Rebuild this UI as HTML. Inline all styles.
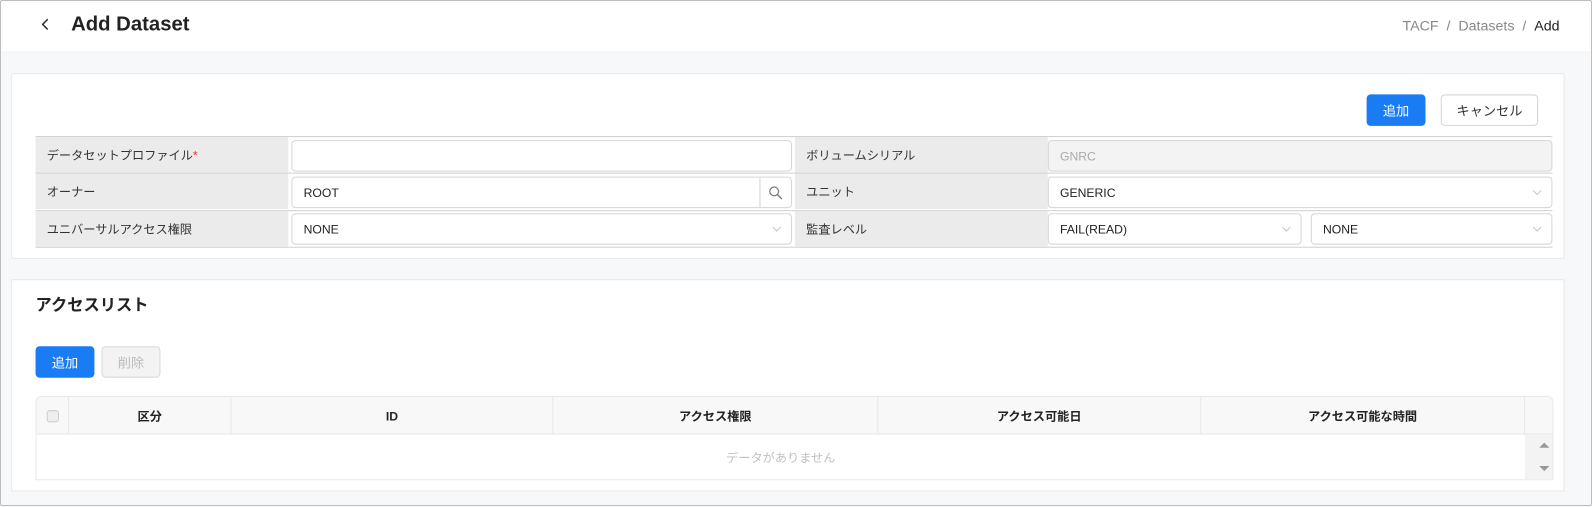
<!DOCTYPE html>
<html><head><meta charset="utf-8"><style>
*{box-sizing:border-box;margin:0;padding:0}
body{width:1592px;height:506px;background:#f7f8fa;font-family:"Liberation Sans","Noto Sans CJK JP",sans-serif;position:relative;overflow:hidden;color:#222}
.a{position:absolute}
#w{position:absolute;left:0;top:0;width:1568px;height:499px;transform:scale(1.01531);transform-origin:0 0}
.frame{left:0;top:0;width:1592px;height:506px;border:1px solid #bdbdbd;border-radius:2px;pointer-events:none}
.hdr{left:1px;top:1px;width:1590px;height:50px;background:#fff}
.card{background:#fff;border:1px solid #e8e8ea}
.lbl{background:#ebebeb;font-size:12px;color:#333;padding-left:11px;display:flex;align-items:center}
.inp{background:#fff;border:1px solid #d5d5d5;border-radius:4px;font-size:12px;padding-left:11px;display:flex;align-items:center;color:#222}
.chev{position:absolute;right:11px;top:10px;width:6px;height:6px;border-right:1px solid #c4c4c4;border-bottom:1px solid #c4c4c4;transform:rotate(45deg)}
.btn{border-radius:4px;font-size:13px;display:flex;align-items:center;justify-content:center}
.th{font-size:12px;font-weight:bold;display:flex;align-items:center;justify-content:center;border-right:1px solid #e8e8e8;height:37px;top:0}
</style></head><body>
<div class="a hdr"></div>
<div id="w">
<svg class="a" style="left:40px;top:18px" width="10" height="12"><path d="M7 1L2 6L7 11" fill="none" stroke="#222" stroke-width="1.4"/></svg>
<div class="a" style="left:70px;top:13px;font-size:20px;font-weight:bold">Add Dataset</div>
<div class="a" style="right:32px;top:17px;font-size:14px;color:#888">TACF&nbsp;&nbsp;/&nbsp;&nbsp;Datasets&nbsp;&nbsp;/&nbsp;&nbsp;<span style="color:#222">Add</span></div>

<div class="a card" style="left:11px;top:72px;width:1530px;height:183px"></div>
<div class="a btn" style="left:1346px;top:93px;width:58px;height:31px;background:#1a7cf5;color:#fff">追加</div>
<div class="a btn" style="left:1419px;top:93px;width:96px;height:31px;border:1px solid #d5d5d5;background:#fff;color:#333">キャンセル</div>

<div class="a" style="left:35px;top:134px;width:1494px;height:110px;border-top:1px solid #d0d0d0;border-bottom:1px solid #d0d0d0"></div>
<div class="a lbl" style="left:35px;top:135px;width:249px;height:35px">データセットプロファイル<span style="color:#e33">*</span></div>
<div class="a lbl" style="left:35px;top:171px;width:249px;height:35px">オーナー</div>
<div class="a lbl" style="left:35px;top:208px;width:249px;height:35px">ユニバーサルアクセス権限</div>
<div class="a lbl" style="left:783px;top:135px;width:249px;height:35px">ボリュームシリアル</div>
<div class="a lbl" style="left:783px;top:171px;width:249px;height:35px">ユニット</div>
<div class="a lbl" style="left:783px;top:208px;width:249px;height:35px">監査レベル</div>
<div class="a" style="left:35px;top:170px;width:1494px;height:1px;background:#d0d0d0"></div>
<div class="a" style="left:35px;top:207px;width:1494px;height:1px;background:#d0d0d0"></div>

<div class="a inp" style="left:287px;top:138px;width:493px;height:31px"></div>
<div class="a inp" style="left:287px;top:174px;width:493px;height:31px">ROOT<div class="a" style="right:30px;top:0;width:1px;height:29px;background:#d5d5d5"></div>
<svg class="a" style="right:8px;top:8px" width="14" height="14"><circle cx="5.5" cy="5.5" r="4.3" fill="none" stroke="#777" stroke-width="1.2"/><path d="M8.7 8.7L13 13" stroke="#777" stroke-width="1.3"/></svg></div>
<div class="a inp" style="left:287px;top:210px;width:493px;height:31px">NONE<div class="chev"></div></div>
<div class="a inp" style="left:1032px;top:138px;width:497px;height:31px;background:#f3f3f3;color:#aaa">GNRC</div>
<div class="a inp" style="left:1032px;top:174px;width:497px;height:31px">GENERIC<div class="chev"></div></div>
<div class="a inp" style="left:1032px;top:210px;width:250px;height:31px">FAIL(READ)<div class="chev"></div></div>
<div class="a inp" style="left:1291px;top:210px;width:238px;height:31px">NONE<div class="chev"></div></div>

<div class="a card" style="left:11px;top:275px;width:1530px;height:209px"></div>
<div class="a" style="left:35px;top:287px;font-size:16px;font-weight:bold">アクセスリスト</div>
<div class="a btn" style="left:35px;top:341px;width:58px;height:31px;background:#1a7cf5;color:#fff">追加</div>
<div class="a btn" style="left:100px;top:341px;width:58px;height:31px;background:#f3f3f3;border:1px solid #d8d8d8;color:#bbb">削除</div>

<div class="a" style="left:35px;top:390px;width:1495px;height:83px;border:1px solid #e8e8e8;border-radius:6px 6px 0 0;overflow:hidden;background:#fff">
 <div class="a" style="left:0;top:0;width:1495px;height:37px;background:#f8f8f8;border-bottom:1px solid #e8e8e8"></div>
 <div class="a th" style="left:0;width:32px"><div style="width:12px;height:12px;border:1px solid #ccc;border-radius:3px;background:#eee"></div></div>
 <div class="a th" style="left:32px;width:160px">区分</div>
 <div class="a th" style="left:192px;width:317px">ID</div>
 <div class="a th" style="left:509px;width:320px">アクセス権限</div>
 <div class="a th" style="left:829px;width:318px">アクセス可能日</div>
 <div class="a th" style="left:1147px;width:319px">アクセス可能な時間</div>
 <div class="a" style="left:1466px;top:37px;width:29px;height:46px;background:#f3f3f3"></div>
 <svg class="a" style="left:1479px;top:44px" width="12" height="30"><path d="M1 6L6 1L11 6Z" fill="#999"/><path d="M1 24L6 29L11 24Z" fill="#999"/></svg>
 <div class="a" style="left:0;top:37px;width:1466px;height:45px;border-bottom:1px solid #e8e8e8;display:flex;align-items:center;justify-content:center;font-size:12px;color:#c0c0c0">データがありません</div>
</div>
</div>
<div class="a frame"></div>
</body></html>
